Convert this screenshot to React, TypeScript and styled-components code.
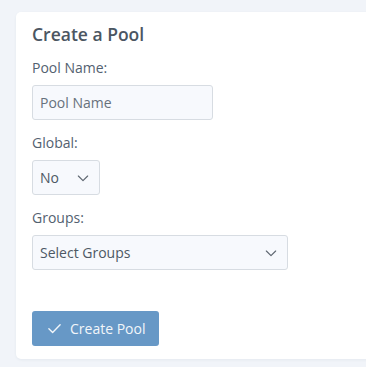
import React from "react";
import styled, { createGlobalStyle } from "styled-components";

const Global = createGlobalStyle`
  html, body { margin: 0; padding: 0; background: #f1f4f9; }
  body { font-family: "Open Sans", "Liberation Sans", sans-serif; }
  * { box-sizing: border-box; }
`;

const Page = styled.div`
  padding: 12px 0 8px 16px;
  width: 366px;
  height: 367px;
  overflow: hidden;
`;

const Card = styled.div`
  background: #ffffff;
  border-radius: 5px 0 0 5px;
  box-shadow: 0 1px 3px rgba(40, 60, 90, 0.06);
  padding: 10px 16px 13px 16px;
  width: 370px;
  height: 347px;
  display: flex;
  flex-direction: column;
`;

const Title = styled.h2`
  margin: 0 0 12px 0;
  font-size: 17.5px;
  font-weight: 600;
  line-height: 24px;
  color: #4b5662;
`;

const Field = styled.div`
  display: flex;
  flex-direction: column;
  gap: 8px;
  margin-bottom: 13px;
`;

const Label = styled.label`
  font-size: 14px;
  line-height: 19px;
  color: #536170;
`;

const Input = styled.div<{ $w: number; $value?: boolean }>`
  width: ${(p) => p.$w}px;
  height: 35px;
  background: #f7f9fd;
  border: 1px solid #d7dce2;
  border-radius: 3px;
  display: flex;
  align-items: center;
  justify-content: space-between;
  padding: 0 8px 0 7px;
  font-size: 14px;
  color: ${(p) => (p.$value ? "#4d5864" : "#67717c")};
`;

const Chevron = () => (
  <svg width="16" height="16" viewBox="0 0 24 24" fill="none" stroke="#5d6670" strokeWidth="1.7" strokeLinecap="round" strokeLinejoin="round">
    <path d="M5 9l7 7 7-7" />
  </svg>
);

const Spacer = styled.div`
  flex: 1;
`;

const Button = styled.button`
  width: 127px;
  height: 35px;
  background: #6798c6;
  border: none;
  border-radius: 3px;
  color: #f2f6fa;
  font-family: inherit;
  font-size: 14px;
  display: flex;
  align-items: center;
  gap: 8px;
  padding: 0 0 0 15px;
`;

export default function App() {
  return (
    <>
      <Global />
      <Page>
        <Card>
          <Title>Create a Pool</Title>
          <Field>
            <Label>Pool Name:</Label>
            <Input $w={181}>Pool Name</Input>
          </Field>
          <Field>
            <Label>Global:</Label>
            <Input $w={68} $value>
              No
              <Chevron />
            </Input>
          </Field>
          <Field>
            <Label>Groups:</Label>
            <Input $w={256} $value>
              Select Groups
              <Chevron />
            </Input>
          </Field>
          <Spacer />
          <Button>
            <svg width="15" height="15" viewBox="0 0 24 24" fill="none" stroke="#f2f6fa" strokeWidth="2.2" strokeLinecap="round" strokeLinejoin="round">
              <path d="M3 12.5l6 6L21 6" />
            </svg>
            Create Pool
          </Button>
        </Card>
      </Page>
    </>
  );
}
